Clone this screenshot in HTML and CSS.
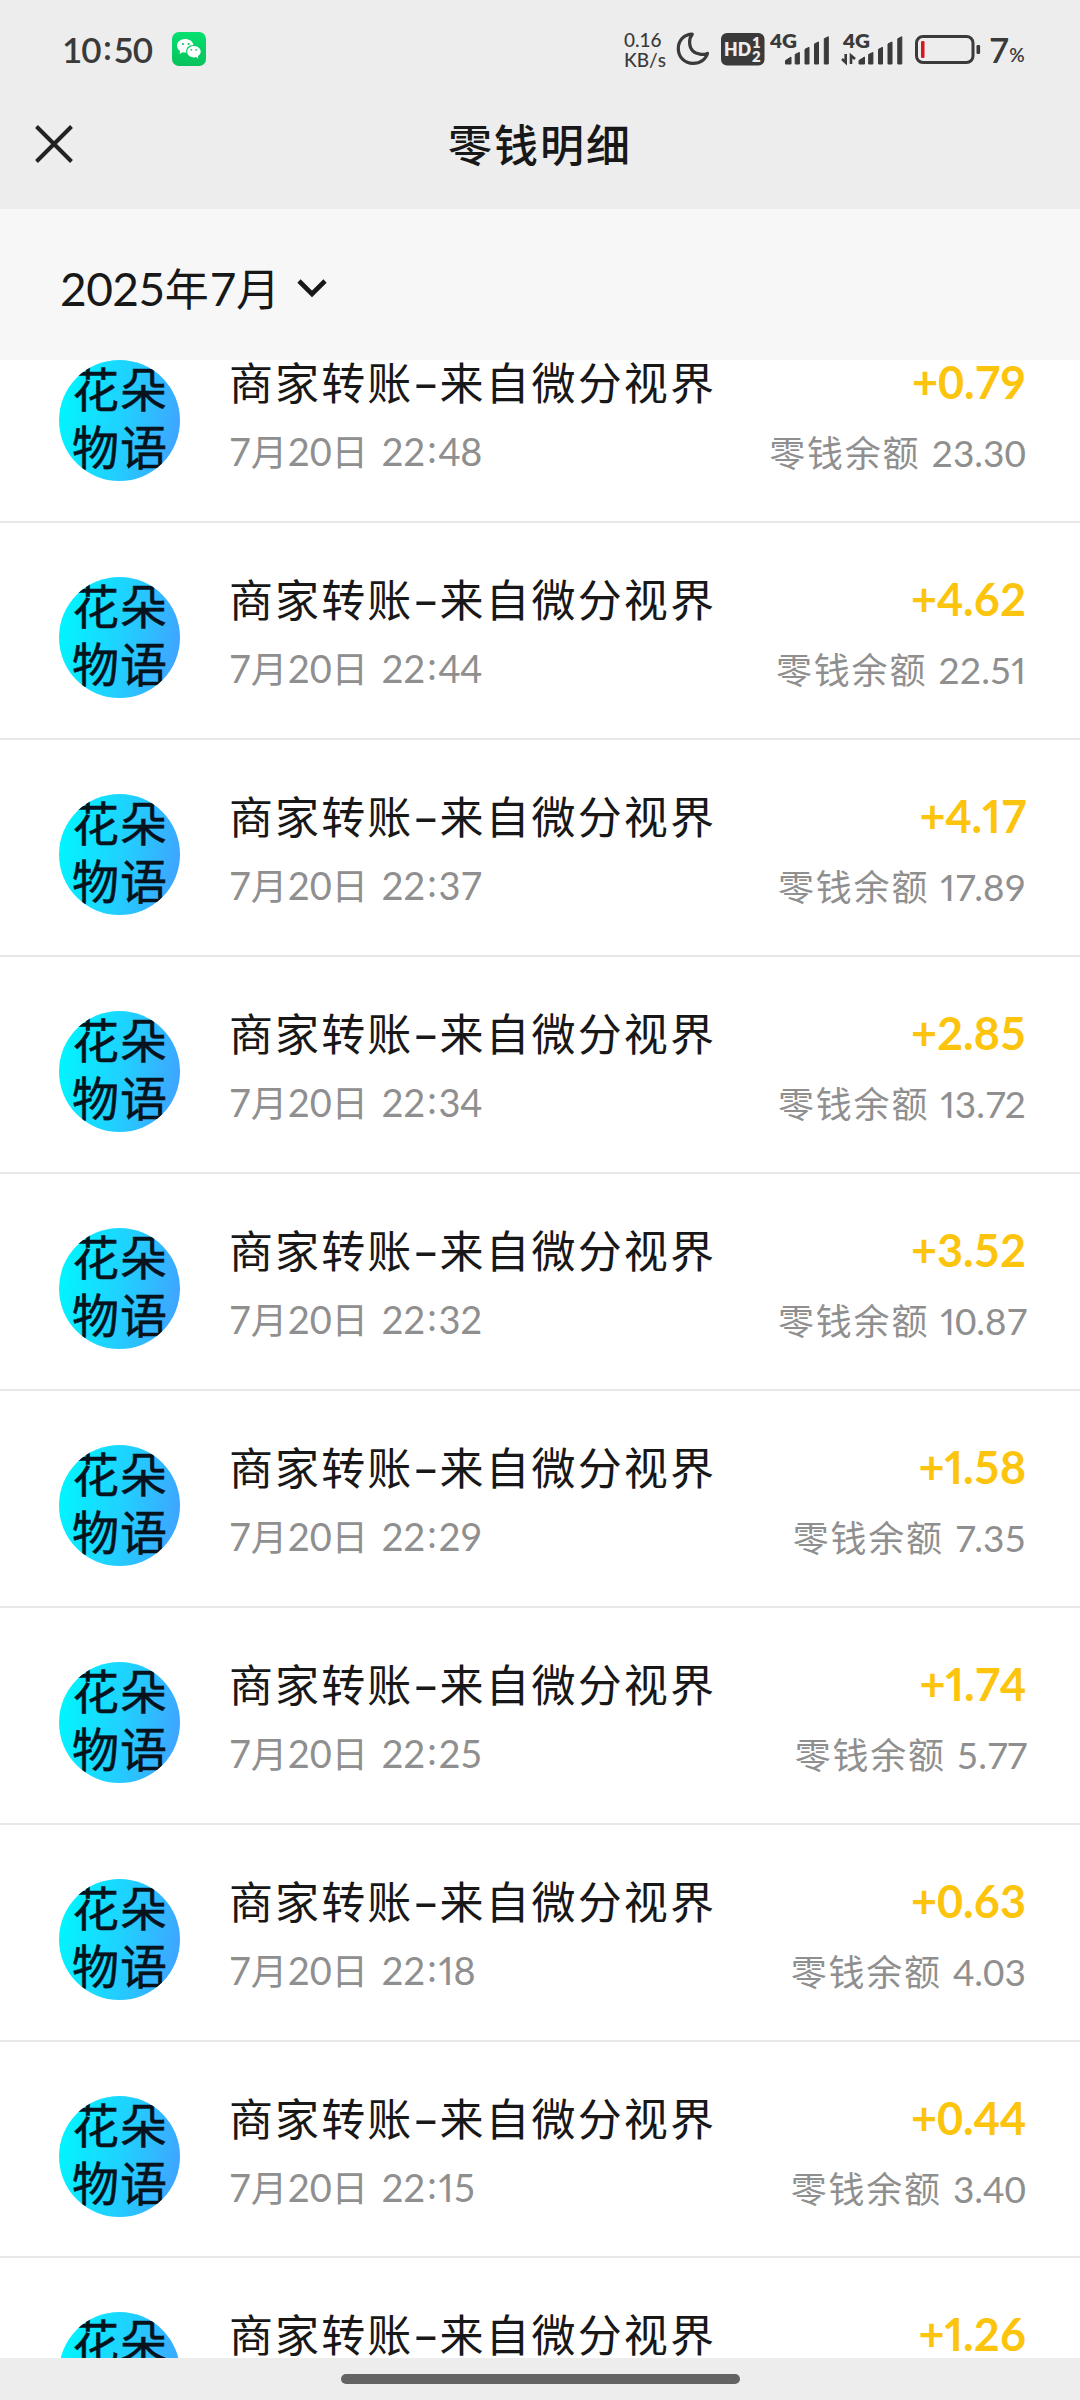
FILE: index.html
```html
<!DOCTYPE html>
<html lang="zh-CN">
<head>
<meta charset="utf-8">
<title>零钱明细</title>
<link rel="stylesheet" href="styles.css">
</head>
<body>
<div class="screen">
  <header class="top">
    <div class="status">
      <span class="clock">10<span class="colon">:</span>50</span>
      <svg class="wechat" width="34" height="34" viewBox="0 0 34 34">
        <defs><linearGradient id="wx" x1="0" y1="0" x2="0" y2="1"><stop offset="0" stop-color="#05e070"/><stop offset="1" stop-color="#08c25c"/></linearGradient></defs>
        <rect width="34" height="34" rx="7" fill="url(#wx)"/>
        <path d="M13 7C8.400 7 5 10 5 13.700c0 2.200 1.200 4 3.100 5.200L7.600 22l3-1.700c.8.200 1.600.2 2.400.2h1.300c-.9-4.500 2.500-7.600 7.200-7.500C20.800 9.300 17.300 7 13 7z" fill="#fff"/>
        <path d="M22 14c-3.900 0-6.800 2.500-6.800 5.700s2.900 5.700 6.800 5.700c.7 0 1.400-.1 2-.3l2.400 1.300-.6-2.300c1.800-1.100 2.900-2.700 2.900-4.400C28.700 16.500 25.800 14 22 14z" fill="#fff"/>
        <g fill="#07c860"><circle cx="11" cy="12" r="1.100"/><circle cx="16.600" cy="12" r="1.100"/><circle cx="19.300" cy="17.800" r=".9"/><circle cx="24.200" cy="17.800" r=".9"/></g>
      </svg>
      <div class="speed"><span class="rate">0.16</span><span class="unit">KB/s</span></div>
      <svg class="moon" width="34" height="34" viewBox="0 0 34 34"><path d="M16.300 2.200C8.500 2.200 2.300 8.200 2.300 16.500c0 8.600 6.300 14.900 14.700 14.900 7.300 0 12.700-4 14.500-10.100-2.200 1.200-4.400 1.300-6.500 1C18.300 21.600 14 17.500 13.600 11c-.2-3.300.6-6.300 2.700-8.800z" fill="none" stroke="#3a3a3a" stroke-width="3.200" stroke-linejoin="round"/></svg>
      <svg class="hd" width="44" height="33" viewBox="0 0 44 33">
        <rect width="43.500" height="32.500" rx="6" fill="#3a3a3a"/>
        <g class="hd-text"><text x="3" y="23" font-size="19" textLength="27" lengthAdjust="spacingAndGlyphs">HD</text><text x="31" y="15" font-size="15">1</text><text x="31" y="28.500" font-size="15">2</text></g>
      </svg>
      <svg class="signal" width="60" height="32" viewBox="0 0 60 32">
        <text class="net" x="0" y="14" font-size="18.500" textLength="27" lengthAdjust="spacingAndGlyphs">4G</text>
        <g class="bars"><path d="M15.500 30v-3.500l5.500-3.500v7z"/><path d="M25.200 30V20.400l4.200-2v11.600z"/><path d="M35 30V15.300l4-2v16.700z"/><path d="M44.500 30V9.900l4-2v22.100z"/><path d="M54.300 30V4.700l4-2v27.300z"/></g>
      </svg>
      <svg class="signal second" width="64" height="32" viewBox="0 0 64 32">
        <text class="net" x="2" y="14" font-size="18.500" textLength="27" lengthAdjust="spacingAndGlyphs">4G</text>
        <path d="M4.700 20v8.500L1 25M10 30v-8.500l4 3.500" fill="none" stroke="#3a3a3a" stroke-width="2.600"/>
        <g class="bars" transform="translate(2.500 0)"><path d="M15.500 30v-3.500l5.500-3.500v7z"/><path d="M25.200 30V20.400l4.200-2v11.600z"/><path d="M35 30V15.300l4-2v16.700z"/><path d="M44.500 30V9.900l4-2v22.100z"/><path d="M54.300 30V4.700l4-2v27.300z"/></g>
      </svg>
      <svg class="battery" width="66" height="29" viewBox="0 0 66 29"><rect x="1.500" y="1.500" width="56.500" height="26" rx="6.500" fill="none" stroke="#3a3a3a" stroke-width="3"/><rect x="6" y="6" width="3.500" height="17" rx="1.200" fill="#d8161f"/><rect x="61.500" y="10" width="3.600" height="9" rx="1.200" fill="#3a3a3a"/></svg>
      <span class="level">7</span><span class="percent">%</span>
    </div>
    <div class="nav">
      <svg class="close" width="38" height="38" viewBox="0 0 38 38"><path d="M1.500 1.500l35 35M36.500 1.500l-35 35" stroke="#222" stroke-width="4" fill="none"/></svg>
      <h1>零钱明细</h1>
    </div>
  </header>
  <div class="filter">
    <span class="month"><span class="num">2025</span>年<span class="num">7</span>月</span>
    <svg class="chevron" width="30" height="20" viewBox="0 0 30 20"><path d="M2 3l13 13L28 3" fill="none" stroke="#181818" stroke-width="4.600"/></svg>
  </div>
  <main class="viewport"><ul class="list" id="list"></ul></main>
  <footer class="home"><div class="handle"></div></footer>
</div>
<script src="list.js"></script>
</body>
</html>
```
FILE: list.js
```js
const rows = [
  ["22:48", "+0.79", "23.30"],
  ["22:44", "+4.62", "22.51"],
  ["22:37", "+4.17", "17.89"],
  ["22:34", "+2.85", "13.72"],
  ["22:32", "+3.52", "10.87"],
  ["22:29", "+1.58", "7.35"],
  ["22:25", "+1.74", "5.77"],
  ["22:18", "+0.63", "4.03"],
  ["22:15", "+0.44", "3.40"],
  ["22:11", "+1.26", "2.96"],
];
// Figures are tabular except for the 1 and the 7, which are set narrower.
const figures = (text) => text
  .replace(/1/g, '<span class="one">1</span>')
  .replace(/7/g, '<span class="seven">7</span>')
  .replace(":", '<span class="colon">:</span>');

// The last row is cut off by the home bar, so its second line is not shown.
document.getElementById("list").innerHTML = rows.map(([time, amount, balance], i) => {
  const last = i === rows.length - 1;
  return `<li class="row">
  <div class="avatar"><span>花朵</span><span>物语</span></div>
  <div class="info">
    <div class="title">商家转账<span class="dash">-</span>来自微分视界</div>
    ${last ? "" : `<div class="date"><span class="num">7</span>月<span class="num">20</span>日<span class="num time">${figures(time)}</span></div>`}
  </div>
  <div class="money">
    <div class="amount">${figures(amount)}</div>
    ${last ? "" : `<div class="balance">零钱余额<span class="num">${figures(balance)}</span></div>`}
  </div>
</li>`;
}).join("");
```
FILE: styles.css
```css
* { box-sizing: border-box; }
body { margin: 0; background: #fff; color: #181818; font-family: "Noto Sans CJK SC", sans-serif; }
.screen { width: 1080px; height: 2400px; display: flex; flex-direction: column; overflow: hidden; }
.num, .clock, .speed, .level, .percent, .amount { font-family: Lato, "Noto Sans", sans-serif; font-kerning: none; }
.one { font-feature-settings: "pnum"; }
.seven { letter-spacing: -2px; }
.seven:last-child { letter-spacing: -1px; }

.top { height: 209px; flex: none; background: #ededed; color: #3a3a3a; }
.status { height: 98px; display: flex; align-items: center; padding-left: 62px; }
.status svg { flex: none; display: block; }
.clock { width: 110px; font-size: 35px; font-weight: 600; line-height: 40px; letter-spacing: -1px; white-space: nowrap; }
.clock .colon { padding: 0 2.500px; }
.colon { position: relative; top: -3px; }
.speed { display: flex; flex-direction: column; width: 50px; margin-left: 418px; font-size: 19px; line-height: 19px; font-weight: 500; margin-top: 1px; }
.speed .rate { line-height: 20px; margin-top: -1px; }
.moon { margin-left: 2px; }
.hd { margin-left: 11px; }
.hd-text { fill: #ededed; font-family: Lato, sans-serif; font-weight: 800; }
.signal { margin-left: 5px; margin-top: 2px; }
.signal.second { margin-left: 11px; }
.net { font-family: Lato, sans-serif; font-weight: 800; fill: #3a3a3a; }
.bars { fill: #3a3a3a; stroke: #3a3a3a; stroke-width: 1; stroke-linejoin: round; }
.battery { margin-left: 10px; }
.level { font-size: 35px; font-weight: 600; line-height: 40px; margin-left: 8px; }
.percent { font-size: 19px; font-weight: 600; line-height: 24px; margin-top: 11px; }

.nav { height: 111px; display: grid; grid-template-columns: 110px 1fr 110px; align-items: center; }
.close { margin: -20px 0 0 35px; }
h1 { margin: -22px 0 0; text-align: center; font-size: 44px; line-height: 64px; font-weight: 500; letter-spacing: 2px; color: #181818; }

.filter { height: 151px; flex: none; background: #f7f7f7; display: flex; align-items: center; padding: 6px 0 0 60px; }
.month { font-size: 44px; line-height: 60px; white-space: nowrap; }
.month .num { font-size: 46px; letter-spacing: -0.500px; }
.month .num + .num { margin-left: 1px; }
.chevron { margin-left: 17px; }

.viewport { height: 1998px; flex: none; overflow: hidden; background: #fff; }
.list { margin: -53.600px 0 0; padding: 0; list-style: none; }
.row { height: 216.900px; display: flex; padding: 0 54px 0 59px; border-bottom: 2px solid #e8e8e8; }
.avatar { width: 121px; height: 121px; margin-top: 54px; border-radius: 50%; overflow: hidden; background: linear-gradient(100deg, #00f6ff 5%, #1fd2ff 50%, #42a0ff 98%); color: #06121c; font-size: 47px; line-height: 58px; font-weight: 400; -webkit-text-stroke: 0.500px #06121c; letter-spacing: 1px; padding-left: 13px; flex: none; }
.avatar span { display: block; white-space: nowrap; margin-top: -2px; }
.avatar span + span { margin-top: 0; }
.info { flex: 1; padding-top: 45px; margin-left: 49px; }
.title { font-size: 44px; line-height: 60px; letter-spacing: 2.100px; white-space: nowrap; }
.dash { display: inline-block; width: 26px; text-align: center; letter-spacing: 0; font-family: Inter, sans-serif; transform: scaleX(1.350); }
.date, .balance { color: #8f8f8f; line-height: 54px; white-space: nowrap; }
.date { font-size: 36.500px; margin-top: 10px; letter-spacing: 0.500px; }
.date .num { font-size: 38px; letter-spacing: -0.200px; }
.date .time { margin-left: 13px; }
.date .colon { padding: 0 2px; }
.money { text-align: right; padding-top: 46px; }
.amount { color: #fcc40c; font-size: 45px; line-height: 60px; font-weight: 700; }
.balance { font-size: 36px; letter-spacing: 1.800px; margin-top: 12px; }
.balance .num { font-size: 37px; margin-left: 11px; letter-spacing: 0; }
.balance .num .seven { letter-spacing: -2px; }

.home { height: 42px; flex: none; background: #ededed; padding-top: 16px; }
.handle { width: 399px; height: 10px; margin: 0 auto; border-radius: 5px; background: #636363; }
```
